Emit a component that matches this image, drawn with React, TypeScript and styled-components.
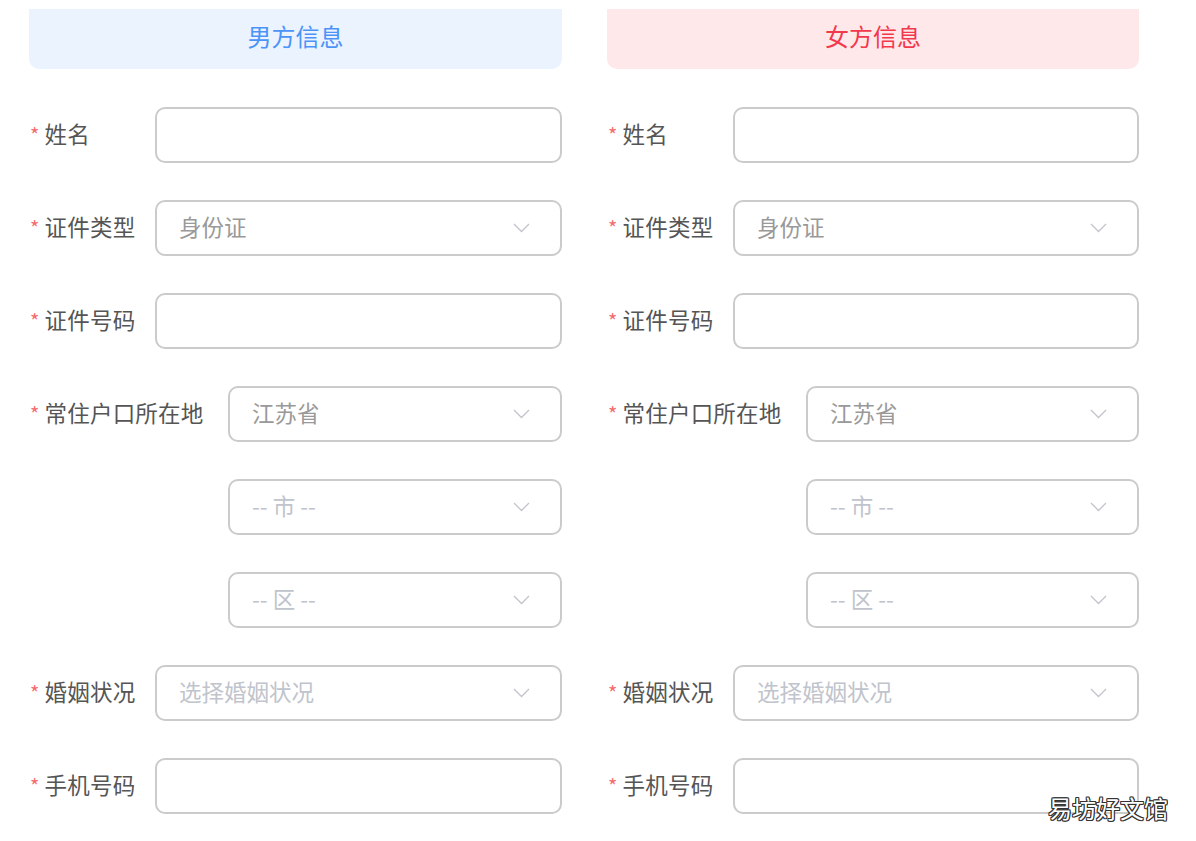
import React from "react";
import styled, { createGlobalStyle } from "styled-components";

const GlobalStyle = createGlobalStyle`
  html, body {
    margin: 0;
    padding: 0;
    background: #fff;
  }
  body {
    font-family: "Noto Sans CJK SC", "Noto Sans", sans-serif;
  }
`;

const StyledPage = styled.div`
  position: relative;
  display: grid;
  grid-template-columns: 533px 532px;
  column-gap: 45px;
  padding: 9px 0 0 29px;
  width: 1196px;
  height: 841px;
  box-sizing: border-box;
  overflow: hidden;
`;

const StyledColumn = styled.section`
  display: flex;
  flex-direction: column;
`;

const StyledHeader = styled.div<{ $tone: "male" | "female" }>`
  height: 60px;
  box-sizing: border-box;
  padding-bottom: 7px;
  display: flex;
  align-items: center;
  justify-content: center;
  border-radius: 0 0 10px 10px;
  margin-bottom: 38px;
  font-size: 24px;
  background: ${(p) => (p.$tone === "male" ? "#ebf3ff" : "#ffe8ea")};
  color: ${(p) => (p.$tone === "male" ? "#4b93f7" : "#f2384c")};
`;

const StyledRows = styled.div`
  display: flex;
  flex-direction: column;
  gap: 37px;
`;

const StyledRow = styled.div`
  display: flex;
  align-items: center;
`;

const StyledLabel = styled.label<{ $wide?: boolean; $blank?: boolean }>`
  flex: 0 0 ${(p) => (p.$wide ? "199px" : "126px")};
  box-sizing: border-box;
  padding: 0 0 4px 1px;
  font-size: 22.5px;
  color: #555;
  white-space: nowrap;
  letter-spacing: 0.2px;
  visibility: ${(p) => (p.$blank ? "hidden" : "visible")};

  span {
    color: #f56c6c;
    font-size: 20px;
    margin-right: 5px;
  }
`;

const StyledInput = styled.input`
  flex: 1;
  min-width: 0;
  height: 56px;
  box-sizing: border-box;
  border: 2px solid #cbcbcb;
  border-radius: 10px;
  padding: 0 22px;
  font-family: inherit;
  font-size: 22.5px;
  color: #555;
  outline: none;
  background: #fff;
`;

const StyledSelect = styled.div<{ $filled?: boolean }>`
  flex: 1;
  min-width: 0;
  height: 56px;
  box-sizing: border-box;
  border: 2px solid #cbcbcb;
  border-radius: 10px;
  padding: 0 30px 0 22px;
  display: flex;
  align-items: center;
  justify-content: space-between;
  font-size: 22.5px;
  color: ${(p) => (p.$filled ? "#999" : "#c0c4cc")};
  background: #fff;

  em {
    font-style: normal;
    padding-bottom: 4px;
  }
`;

const StyledWatermark = styled.div`
  position: absolute;
  right: 28px;
  bottom: 16px;
  font-size: 24px;
  color: #fff;
  text-shadow: -1px -1px 0 #333, 1px -1px 0 #333, -1px 1px 0 #333,
    1px 1px 0 #333, 0 1px 0 #333, 0 -1px 0 #333, 1px 0 0 #333, -1px 0 0 #333;
`;

const Chevron = () => (
  <svg width="17" height="10" viewBox="0 0 17 10" fill="none">
    <path d="M1 1l7.5 7.5L16 1" stroke="#c0c4cc" strokeWidth="1.3" />
  </svg>
);

type Field =
  | { kind: "input"; label: string }
  | { kind: "select"; label: string; text: string; filled?: boolean };

const fields: Field[] = [
  { kind: "input", label: "姓名" },
  { kind: "select", label: "证件类型", text: "身份证", filled: true },
  { kind: "input", label: "证件号码" },
  { kind: "select", label: "常住户口所在地", text: "江苏省", filled: true },
  { kind: "select", label: "常住户口所在地", text: "-- 市 --" },
  { kind: "select", label: "常住户口所在地", text: "-- 区 --" },
  { kind: "select", label: "婚姻状况", text: "选择婚姻状况" },
  { kind: "input", label: "手机号码" },
];

function Column({ tone, title }: { tone: "male" | "female"; title: string }) {
  return (
    <StyledColumn>
      <StyledHeader $tone={tone}>{title}</StyledHeader>
      <StyledRows>
        {fields.map((f, i) => {
          const wide = i >= 3 && i <= 5;
          // city and district rows keep the address label's width, unshown
          const blank = i === 4 || i === 5;
          return (
            <StyledRow key={i}>
              <StyledLabel $wide={wide} $blank={blank}>
                <span>*</span>
                {f.label}
              </StyledLabel>
              {f.kind === "input" ? (
                <StyledInput type="text" />
              ) : (
                <StyledSelect $filled={f.filled}>
                  <em>{f.text}</em>
                  <Chevron />
                </StyledSelect>
              )}
            </StyledRow>
          );
        })}
      </StyledRows>
    </StyledColumn>
  );
}

export default function App() {
  return (
    <>
      <GlobalStyle />
      <StyledPage>
        <Column tone="male" title="男方信息" />
        <Column tone="female" title="女方信息" />
        <StyledWatermark>易坊好文馆</StyledWatermark>
      </StyledPage>
    </>
  );
}
